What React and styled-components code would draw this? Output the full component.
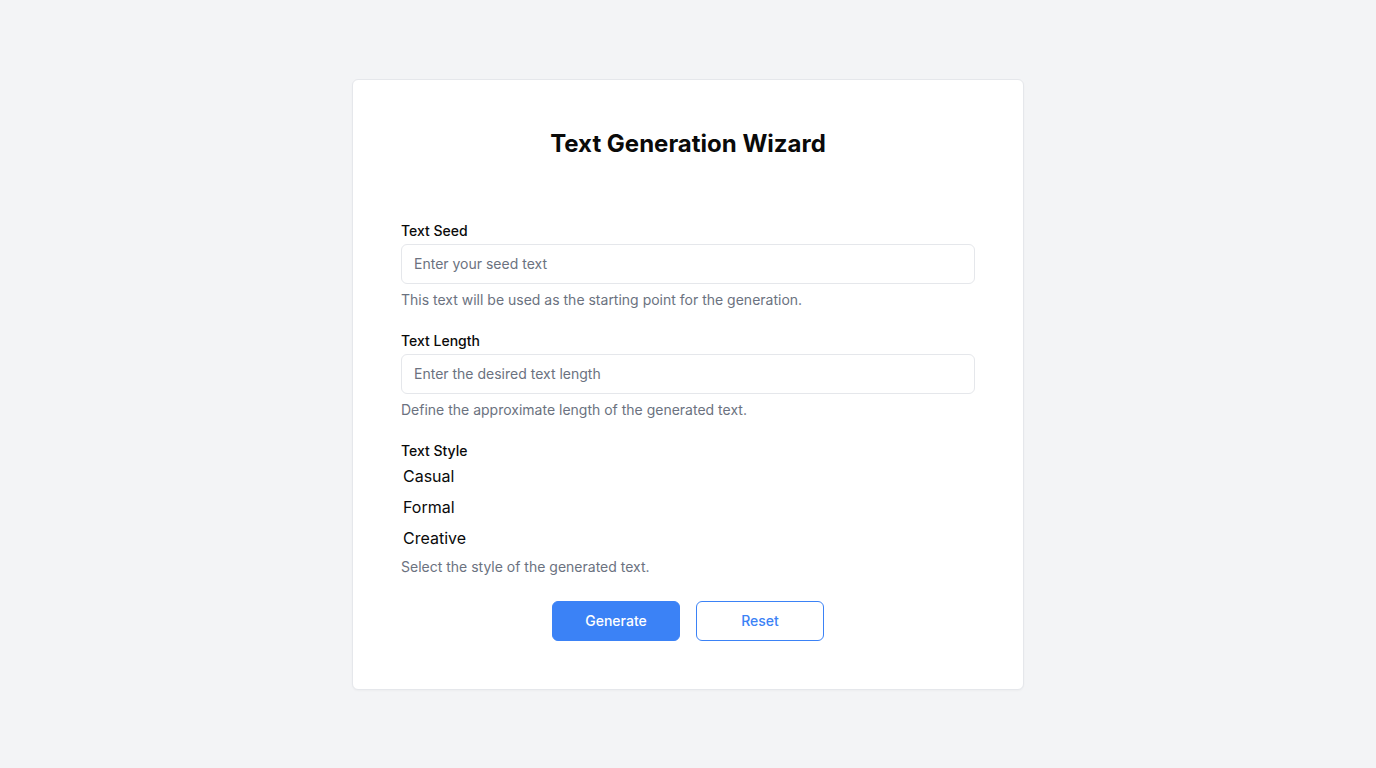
import React from "react";
import styled, { createGlobalStyle } from "styled-components";

const Global = createGlobalStyle`
  * { box-sizing: border-box; }
  html, body { margin: 0; padding: 0; }
  body {
    background: #f3f4f6;
    font-family: Inter, "Noto Sans", sans-serif;
    color: #111827;
  }
`;

const Page = styled.div`
  min-height: 100vh;
  display: flex;
  align-items: center;
  justify-content: center;
`;

const Card = styled.div`
  width: 672px;
  background: #ffffff;
  border: 1px solid #e5e7eb;
  border-radius: 6px;
  padding: 48px;
  box-shadow: 0 1px 2px rgba(0, 0, 0, 0.03);
`;

const Title = styled.h1`
  margin: 0 0 61px;
  text-align: center;
  font-size: 24px;
  line-height: 32px;
  font-weight: 700;
  color: #0a0a0a;
`;

const Form = styled.form`
  display: flex;
  flex-direction: column;
  gap: 21px;
`;

const Field = styled.div`
  display: flex;
  flex-direction: column;
`;

const Label = styled.label`
  font-size: 14px;
  line-height: 20px;
  font-weight: 500;
  color: #0a0a0a;
  margin-bottom: 3px;
`;

const Input = styled.input`
  height: 40px;
  width: 100%;
  border: 1px solid #e5e7eb;
  border-radius: 6px;
  padding: 0 12px;
  font-family: inherit;
  font-size: 14px;
  color: #111827;
  outline: none;
  &::placeholder {
    color: #6b7280;
  }
`;

const Help = styled.p`
  margin: ${(p) => (p.$after === "options" ? "7px" : "6px")} 0 0;
  font-size: 14px;
  line-height: 20px;
  color: #6b7280;
`;

const Options = styled.div`
  display: flex;
  flex-direction: column;
  gap: 7px;
  padding-left: 2px;
`;

const Option = styled.div`
  font-size: 16px;
  line-height: 24px;
  color: #0a0a0a;
`;

const Buttons = styled.div`
  display: flex;
  justify-content: center;
  gap: 16px;
  margin-top: 3px;
`;

const Button = styled.button`
  width: 128px;
  height: 40px;
  border-radius: 6px;
  font-family: inherit;
  font-size: 14px;
  font-weight: 500;
  cursor: pointer;
  border: 1px solid #3b82f6;
  background: ${(p) => (p.$primary ? "#3b82f6" : "#ffffff")};
  color: ${(p) => (p.$primary ? "#ffffff" : "#3b82f6")};
`;

export default function App() {
  return (
    <>
      <Global />
      <Page>
        <Card>
          <Title>Text Generation Wizard</Title>
          <Form onSubmit={(e) => e.preventDefault()}>
            <Field>
              <Label>Text Seed</Label>
              <Input placeholder="Enter your seed text" />
              <Help>This text will be used as the starting point for the generation.</Help>
            </Field>
            <Field>
              <Label>Text Length</Label>
              <Input placeholder="Enter the desired text length" />
              <Help>Define the approximate length of the generated text.</Help>
            </Field>
            <Field>
              <Label>Text Style</Label>
              <Options>
                <Option>Casual</Option>
                <Option>Formal</Option>
                <Option>Creative</Option>
              </Options>
              <Help $after="options">Select the style of the generated text.</Help>
            </Field>
            <Buttons>
              <Button type="button" $primary>Generate</Button>
              <Button type="button">Reset</Button>
            </Buttons>
          </Form>
        </Card>
      </Page>
    </>
  );
}
